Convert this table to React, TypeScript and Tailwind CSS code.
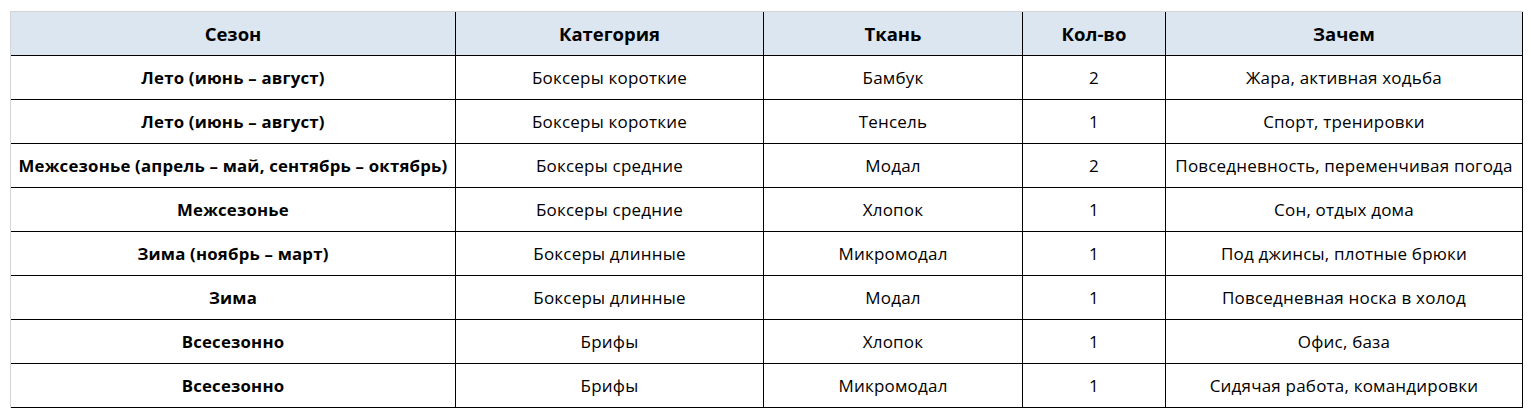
const rows = [
  ["Лето (июнь – август)", "Боксеры короткие", "Бамбук", "2", "Жара, активная ходьба"],
  ["Лето (июнь – август)", "Боксеры короткие", "Тенсель", "1", "Спорт, тренировки"],
  ["Межсезонье (апрель – май, сентябрь – октябрь)", "Боксеры средние", "Модал", "2", "Повседневность, переменчивая погода"],
  ["Межсезонье", "Боксеры средние", "Хлопок", "1", "Сон, отдых дома"],
  ["Зима (ноябрь – март)", "Боксеры длинные", "Микромодал", "1", "Под джинсы, плотные брюки"],
  ["Зима", "Боксеры длинные", "Модал", "1", "Повседневная носка в холод"],
  ["Всесезонно", "Брифы", "Хлопок", "1", "Офис, база"],
  ["Всесезонно", "Брифы", "Микромодал", "1", "Сидячая работа, командировки"],
]

const headers = ["Сезон", "Категория", "Ткань", "Кол-во", "Зачем"]
const widths = ["w-[445px]", "w-[308px]", "w-[259px]", "w-[143px]", "w-[357px]"]

export default function App() {
  return (
    <div className="min-h-screen bg-white pt-[11px] pl-[10px] font-['Open_Sans',sans-serif] text-black">
      <table className="table-fixed border-separate border-spacing-0 border-t border-l border-[#d4d4d4] w-[1512px]">
        <colgroup>
          {widths.map((w, i) => (
            <col key={i} className={w} />
          ))}
        </colgroup>
        <thead>
          <tr className="bg-[#dce6f1]">
            {headers.map((h) => (
              <th key={h} className="h-[44px] border-r border-b border-black text-center align-middle text-[18.5px] font-bold p-0">
                {h}
              </th>
            ))}
          </tr>
        </thead>
        <tbody>
          {rows.map((r, i) => (
            <tr key={i}>
              {r.map((c, j) => (
                <td
                  key={j}
                  className={
                    "h-[44px] border-r border-b border-black text-center align-middle p-0 whitespace-nowrap tracking-[0.2px]" +
                    (j === 0 ? " font-bold text-[16.8px]" : " text-[17px]")
                  }
                >
                  {c}
                </td>
              ))}
            </tr>
          ))}
        </tbody>
      </table>
    </div>
  )
}
